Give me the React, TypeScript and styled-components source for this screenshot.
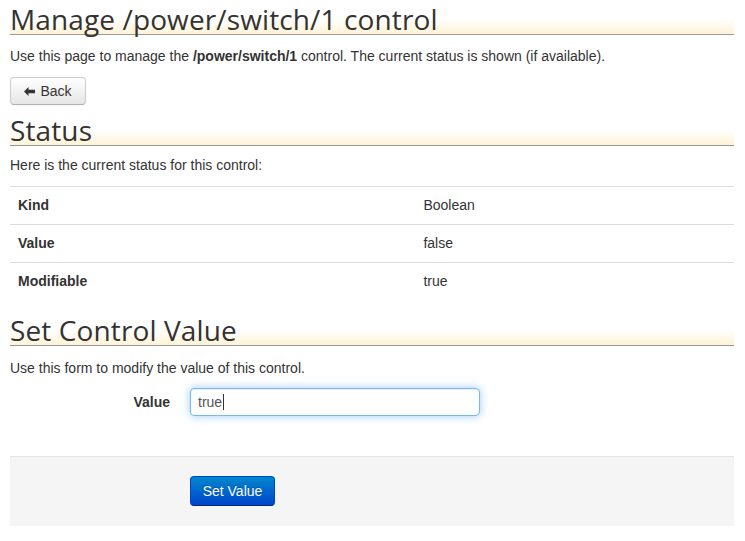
import React from "react";
import styled, { createGlobalStyle } from "styled-components";

const Global = createGlobalStyle`
  html, body { margin: 0; padding: 0; background: #fff; }
  body {
    font-family: "Liberation Sans", Arial, sans-serif;
    font-size: 14px;
    line-height: 20px;
    color: #333;
  }
`;

const Page = styled.div`
  padding: 0 11px 0 10px;
`;

const Heading = styled.h1<{ $top: number }>`
  margin: ${(p) => p.$top}px 0 0;
  padding-top: 4px;
  font-family: "Open Sans", sans-serif;
  font-weight: 400;
  font-size: 28px;
  line-height: 30px;
  letter-spacing: 0.12px;
  color: #333;
  border-bottom: 1px solid #999;
  background: linear-gradient(to bottom, #fff 55%, #fff3d6 100%);
`;

const Para = styled.p<{ $top: number }>`
  margin: ${(p) => p.$top}px 0 0;
`;

const BackButton = styled.button`
  margin-top: 11px;
  display: flex;
  align-items: center;
  gap: 5px;
  box-sizing: border-box;
  height: 28px;
  width: 76px;
  padding: 0 12px;
  justify-content: center;
  font-family: "Liberation Sans", Arial, sans-serif;
  font-size: 14px;
  color: #333;
  background: linear-gradient(to bottom, #fff, #e6e6e6);
  border: 1px solid #ccc;
  border-bottom-color: #b3b3b3;
  border-radius: 4px;
  box-shadow: inset 0 1px 0 rgba(255,255,255,.2), 0 1px 2px rgba(0,0,0,.05);
`;

const Table = styled.table`
  margin-top: 11px;
  width: 100%;
  border-collapse: collapse;
`;

const Cell = styled.td<{ $bold?: boolean; $w?: string }>`
  padding: 8px 8px 9px;
  border-top: 1px solid #ddd;
  font-weight: ${(p) => (p.$bold ? 700 : 400)};
  width: ${(p) => p.$w || "auto"};
  text-align: left;
  vertical-align: top;
`;

const FieldRow = styled.div`
  margin-top: 10px;
  display: flex;
  align-items: center;
`;

const Label = styled.label`
  width: 160px;
  text-align: right;
  font-weight: 700;
  padding-right: 20px;
`;

const Input = styled.div`
  box-sizing: border-box;
  width: 290px;
  height: 28px;
  padding: 0 7px;
  display: flex;
  align-items: center;
  border: 1px solid rgba(82, 168, 236, 0.8);
  border-radius: 4px;
  box-shadow: inset 0 1px 1px rgba(0,0,0,.075), 0 0 8px rgba(82,168,236,.6);
  font-size: 14px;
  color: #555;
`;

const Caret = styled.span`
  display: inline-block;
  width: 1px;
  height: 16px;
  background: #333;
  margin-left: 1px;
`;

const Actions = styled.div`
  margin-top: 40px;
  box-sizing: border-box;
  height: 70px;
  padding: 19px 0 0 180px;
  background: #f5f5f5;
  border-top: 1px solid #e5e5e5;
`;

const PrimaryButton = styled.button`
  height: 30px;
  width: 85px;
  font-family: "Liberation Sans", Arial, sans-serif;
  font-size: 14px;
  color: #fff;
  text-shadow: 0 -1px 0 rgba(0,0,0,.25);
  background: linear-gradient(to bottom, #0088cc, #0044cc);
  border: 1px solid #0044cc;
  border-bottom-color: #002a80;
  border-radius: 4px;
  padding: 0;
`;

const ArrowLeft = () => (
  <svg width="11" height="9" viewBox="0 0 11 9" aria-hidden="true">
    <path d="M0 4.5 L4.5 0 L4.5 2.8 L11 2.8 L11 6.2 L4.5 6.2 L4.5 9 Z" fill="#333" />
  </svg>
);

export default function App() {
  const rows = [
    ["Kind", "Boolean"],
    ["Value", "false"],
    ["Modifiable", "true"],
  ];
  return (
    <>
      <Global />
      <Page>
        <Heading $top={0}>Manage /power/switch/1 control</Heading>
        <Para $top={11}>
          Use this page to manage the <b>/power/switch/1</b> control. The current status is shown (if available).
        </Para>
        <BackButton>
          <ArrowLeft /> Back
        </BackButton>
        <Heading as="h2" $top={6}>Status</Heading>
        <Para $top={9}>Here is the current status for this control:</Para>
        <Table>
          <tbody>
            {rows.map(([k, v]) => (
              <tr key={k}>
                <Cell $bold $w="56%">{k}</Cell>
                <Cell>{v}</Cell>
              </tr>
            ))}
          </tbody>
        </Table>
        <Heading as="h2" $top={11}>Set Control Value</Heading>
        <Para $top={12}>Use this form to modify the value of this control.</Para>
        <FieldRow>
          <Label>Value</Label>
          <Input>
            true<Caret />
          </Input>
        </FieldRow>
        <Actions>
          <PrimaryButton>Set Value</PrimaryButton>
        </Actions>
      </Page>
    </>
  );
}
